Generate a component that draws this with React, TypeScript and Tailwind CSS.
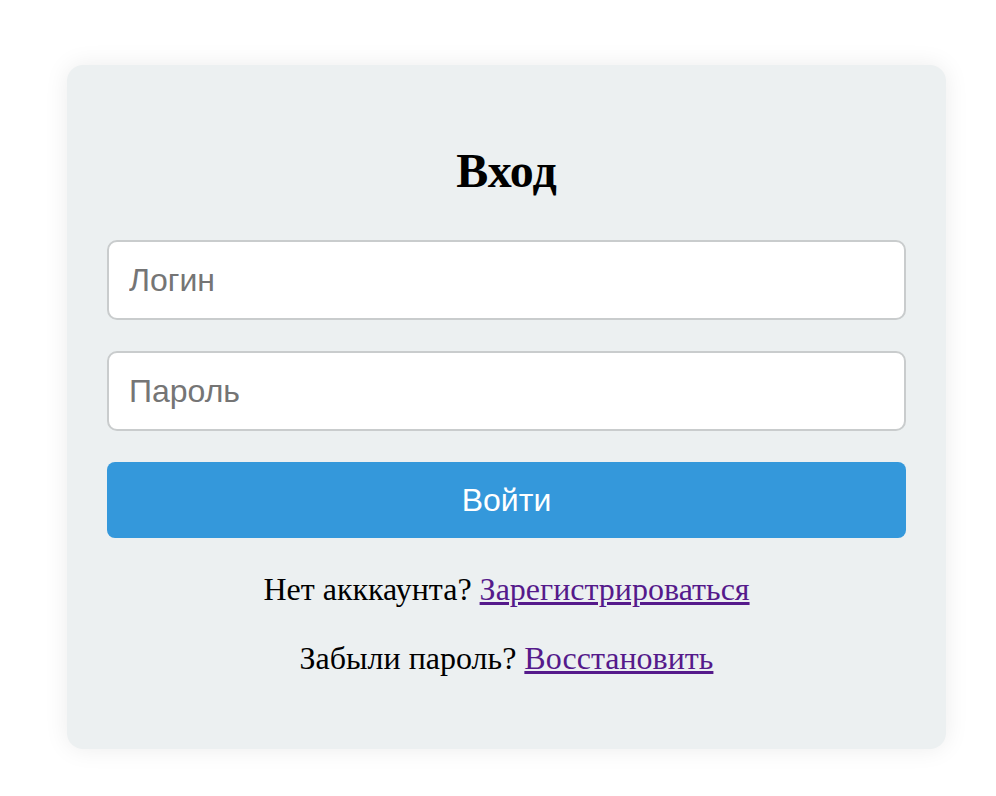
export default function App() {
  return (
    <div className="min-h-screen bg-white pt-[65px] pl-[67px]">
      <div className="w-[879px] rounded-[16px] bg-[#ecf0f1] px-[40px] pt-[78px] pb-[72px] shadow-[0_0_24px_rgba(0,0,0,0.08)]">
        <h1 className="text-center font-['Liberation_Serif',serif] text-[48px] font-bold leading-[55px] text-black">
          Вход
        </h1>

        <form className="mt-[42px] flex flex-col" onSubmit={e => e.preventDefault()}>
          <input
            type="text"
            placeholder="Логин"
            className="h-[80px] w-full rounded-[10px] border-2 border-[#c9cccd] bg-white px-[20px] font-['Liberation_Sans',Arial,sans-serif] text-[32px] text-black outline-none placeholder:text-[#757575]"
          />
          <input
            type="password"
            placeholder="Пароль"
            className="mt-[31px] h-[80px] w-full rounded-[10px] border-2 border-[#c9cccd] bg-white px-[20px] font-['Liberation_Sans',Arial,sans-serif] text-[32px] text-black outline-none placeholder:text-[#757575]"
          />
          <button
            type="submit"
            className="mt-[31px] h-[76px] w-full rounded-[8px] bg-[#3498db] font-['Liberation_Sans',Arial,sans-serif] text-[32px] text-white"
          >
            Войти
          </button>
        </form>

        <div className="mt-[33px] flex flex-col gap-[32px] text-center font-['Liberation_Serif',serif] text-[32px] leading-[37px] text-black">
          <p>
            Нет акккаунта?{' '}
            <a href="#" className="text-[#551a8b] underline">
              Зарегистрироваться
            </a>
          </p>
          <p>
            Забыли пароль?{' '}
            <a href="#" className="text-[#551a8b] underline">
              Восстановить
            </a>
          </p>
        </div>
      </div>
    </div>
  )
}
